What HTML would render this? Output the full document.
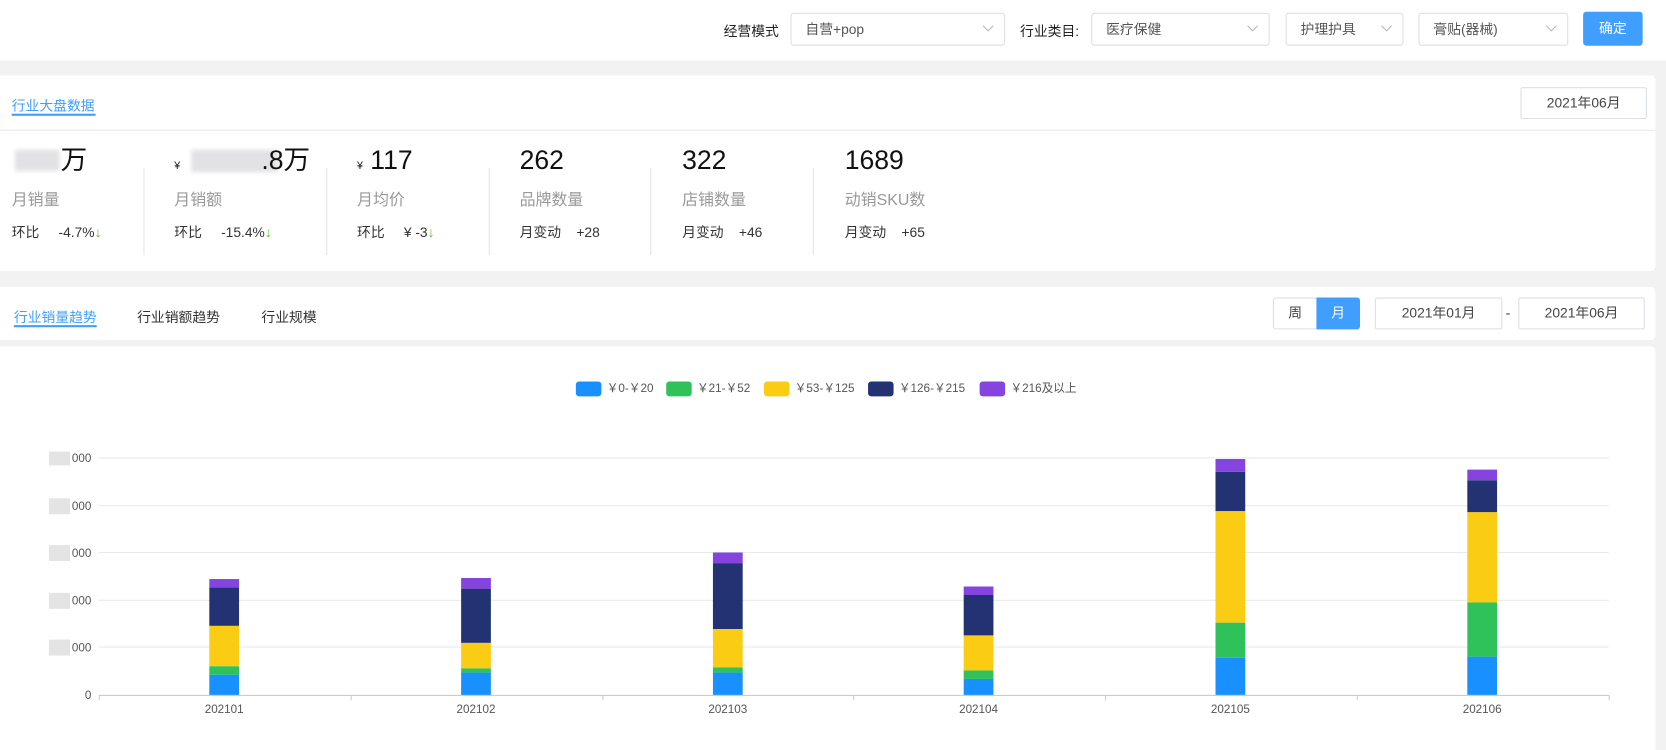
<!DOCTYPE html>
<html><head><meta charset="utf-8"><style>
html,body{margin:0;padding:0;width:1666px;height:741px;overflow:hidden;background:#f2f2f2;font-family:"Liberation Sans","Noto Sans CJK SC",sans-serif;}
#w{position:absolute;left:0;top:0;width:1568px;height:698px;transform:scale(1.0625);transform-origin:0 0;}
.a{position:absolute;white-space:nowrap;}
.p{position:absolute;background:#fff;}
.sel{position:absolute;border:1px solid #dcdfe6;border-radius:3px;background:#fff;font-size:13px;color:#555;box-sizing:border-box;height:31px;line-height:29px;padding-left:13px;}
.sel svg{position:absolute;right:10px;top:11px;}
.big{font-size:25px;color:#111;line-height:30px;}
.lbl{font-size:15px;color:#999;}
.sub{font-size:13px;color:#333;}
.dv{position:absolute;width:1px;background:#e4e4e4;top:158px;height:82px;}
.dt{position:absolute;border:1px solid #dcdfe6;border-radius:2px;font-size:13px;color:#444;text-align:center;box-sizing:border-box;height:30px;line-height:28px;background:#fff;}
.lg{position:absolute;top:359px;font-size:11px;color:#555;line-height:14px;}
.lg i{display:inline-block;width:24px;height:14px;border-radius:3px;vertical-align:top;margin-right:5px;}
.ar{color:#52c41a;}
.bl{position:absolute;background:#e2e2e4;filter:blur(2px);}
</style></head><body><div id="w">
<div class="p" style="left:0;top:0;width:1568px;height:57px;"></div>
<div class="a" style="left:681px;top:19px;font-size:13px;color:#222;">经营模式</div>
<div class="sel" style="left:744px;top:12px;width:202px;">自营+pop<svg width="10" height="6"><path d="M0 0L5 5L10 0" fill="none" stroke="#bbb"/></svg></div>
<div class="a" style="left:960px;top:19px;font-size:13px;color:#222;">行业类目:</div>
<div class="sel" style="left:1027px;top:12px;width:168px;">医疗保健<svg width="10" height="6"><path d="M0 0L5 5L10 0" fill="none" stroke="#bbb"/></svg></div>
<div class="sel" style="left:1210px;top:12px;width:111px;">护理护具<svg width="10" height="6"><path d="M0 0L5 5L10 0" fill="none" stroke="#bbb"/></svg></div>
<div class="sel" style="left:1335px;top:12px;width:141px;">膏贴(器械)<svg width="10" height="6"><path d="M0 0L5 5L10 0" fill="none" stroke="#bbb"/></svg></div>
<div class="a" style="left:1490px;top:11px;width:56px;height:32px;background:#409eff;border-radius:3px;color:#fff;font-size:13px;text-align:center;line-height:32px;">确定</div>

<div class="p" style="left:0;top:71px;width:1558px;height:184px;border-radius:0 4px 4px 0;"></div>
<div class="a" style="left:11px;top:89px;font-size:13px;color:#409eff;">行业大盘数据</div>
<div class="a" style="left:11px;top:107px;width:79px;height:2px;background:#409eff;"></div>
<div class="a" style="left:0;top:122px;width:1558px;height:1px;background:#e8e8e8;"></div>
<div class="dt" style="left:1431px;top:82px;width:119px;">2021年06月</div>

<div class="bl" style="left:14px;top:141px;width:42px;height:20px;"></div>
<div class="a big" style="left:57px;top:136px;">万</div>
<div class="a big" style="left:164px;top:136px;"><span style="font-size:10px">¥</span></div>
<div class="bl" style="left:180px;top:141px;width:82px;height:21px;"></div>
<div class="a big" style="left:246px;top:136px;">.8万</div>
<div class="a big" style="left:336px;top:136px;"><span style="font-size:10px">¥</span> 117</div>
<div class="a big" style="left:489px;top:136px;">262</div>
<div class="a big" style="left:642px;top:136px;">322</div>
<div class="a big" style="left:795px;top:136px;">1689</div>
<div class="a lbl" style="left:11px;top:177px;">月销量</div>
<div class="a lbl" style="left:164px;top:177px;">月销额</div>
<div class="a lbl" style="left:336px;top:177px;">月均价</div>
<div class="a lbl" style="left:489px;top:177px;">品牌数量</div>
<div class="a lbl" style="left:642px;top:177px;">店铺数量</div>
<div class="a lbl" style="left:795px;top:177px;">动销SKU数</div>
<div class="a sub" style="left:11px;top:208px;">环比 &nbsp;&nbsp;&nbsp; -4.7%<span class="ar">↓</span></div>
<div class="a sub" style="left:164px;top:208px;">环比 &nbsp;&nbsp;&nbsp; -15.4%<span class="ar">↓</span></div>
<div class="a sub" style="left:336px;top:208px;">环比 &nbsp;&nbsp;&nbsp; ¥ -3<span class="ar">↓</span></div>
<div class="a sub" style="left:489px;top:208px;">月变动 &nbsp;&nbsp; +28</div>
<div class="a sub" style="left:642px;top:208px;">月变动 &nbsp;&nbsp; +46</div>
<div class="a sub" style="left:795px;top:208px;">月变动 &nbsp;&nbsp; +65</div>
<div class="dv" style="left:135px"></div><div class="dv" style="left:307px"></div><div class="dv" style="left:460px"></div><div class="dv" style="left:612px"></div><div class="dv" style="left:765px"></div>

<div class="p" style="left:0;top:270px;width:1558px;height:50px;border-radius:0 4px 4px 0;"></div>
<div class="a" style="left:13px;top:288px;font-size:13px;color:#409eff;">行业销量趋势</div>
<div class="a" style="left:13px;top:306px;width:78px;height:2px;background:#409eff;"></div>
<div class="a" style="left:129px;top:288px;font-size:13px;color:#333;">行业销额趋势</div>
<div class="a" style="left:246px;top:288px;font-size:13px;color:#333;">行业规模</div>
<div class="dt" style="left:1198px;top:280px;width:42px;border-radius:3px 0 0 3px;">周</div>
<div class="dt" style="left:1239px;top:280px;width:41px;background:#409eff;border-color:#409eff;color:#fff;border-radius:0 3px 3px 0;">月</div>
<div class="dt" style="left:1294px;top:280px;width:120px;">2021年01月</div>
<div class="a" style="left:1417px;top:287px;font-size:13px;color:#333;">-</div>
<div class="dt" style="left:1429px;top:280px;width:119px;">2021年06月</div>

<div class="p" style="left:0;top:326px;width:1558px;height:380px;border-radius:0 4px 0 0;"></div>
<div class="lg" style="left:542px"><i style="background:#1890ff"></i>￥0-￥20</div>
<div class="lg" style="left:627px"><i style="background:#2fc25b"></i>￥21-￥52</div>
<div class="lg" style="left:719px"><i style="background:#facc14"></i>￥53-￥125</div>
<div class="lg" style="left:817px"><i style="background:#223273"></i>￥126-￥215</div>
<div class="lg" style="left:922px"><i style="background:#8543e0"></i>￥216及以上</div>

<svg class="a" style="left:0;top:0" width="1568" height="698" font-family="Liberation Sans,sans-serif" font-size="11" fill="#555">
<g stroke="#e9e9e9"><line x1="93" x2="1514" y1="431" y2="431"/><line x1="93" x2="1514" y1="476" y2="476"/><line x1="93" x2="1514" y1="520" y2="520"/><line x1="93" x2="1514" y1="565" y2="565"/><line x1="93" x2="1514" y1="609" y2="609"/></g>
<g stroke="#ccc"><line x1="93" x2="1514" y1="654.5" y2="654.5"/>
<line x1="93.5" x2="93.5" y1="654" y2="659"/><line x1="330.5" x2="330.5" y1="654" y2="659"/><line x1="567.5" x2="567.5" y1="654" y2="659"/><line x1="803.5" x2="803.5" y1="654" y2="659"/><line x1="1040.5" x2="1040.5" y1="654" y2="659"/><line x1="1277.5" x2="1277.5" y1="654" y2="659"/><line x1="1514.5" x2="1514.5" y1="654" y2="659"/></g>
<g fill="#e4e4e4"><rect x="46" y="425" width="20" height="13"/><rect x="46" y="469" width="20" height="15"/><rect x="46" y="513" width="20" height="15"/><rect x="46" y="558" width="20" height="15"/><rect x="46" y="602" width="20" height="15"/></g>
<g text-anchor="end"><text x="86" y="435">000</text><text x="86" y="480">000</text><text x="86" y="524">000</text><text x="86" y="569">000</text><text x="86" y="613">000</text><text x="86" y="658">0</text></g>
<g text-anchor="middle"><text x="211" y="671">202101</text><text x="448" y="671">202102</text><text x="685" y="671">202103</text><text x="921" y="671">202104</text><text x="1158" y="671">202105</text><text x="1395" y="671">202106</text></g>
<g>
<rect x="197" y="635" width="28" height="19" fill="#1890ff"/><rect x="197" y="627" width="28" height="8" fill="#2fc25b"/><rect x="197" y="589" width="28" height="38" fill="#facc14"/><rect x="197" y="553" width="28" height="36" fill="#223273"/><rect x="197" y="545" width="28" height="8" fill="#8543e0"/>
<rect x="434" y="633" width="28" height="21" fill="#1890ff"/><rect x="434" y="629" width="28" height="4" fill="#2fc25b"/><rect x="434" y="605" width="28" height="24" fill="#facc14"/><rect x="434" y="554" width="28" height="51" fill="#223273"/><rect x="434" y="544" width="28" height="10" fill="#8543e0"/>
<rect x="671" y="633" width="28" height="21" fill="#1890ff"/><rect x="671" y="628" width="28" height="5" fill="#2fc25b"/><rect x="671" y="592" width="28" height="36" fill="#facc14"/><rect x="671" y="530" width="28" height="62" fill="#223273"/><rect x="671" y="520" width="28" height="10" fill="#8543e0"/>
<rect x="907" y="639" width="28" height="15" fill="#1890ff"/><rect x="907" y="631" width="28" height="8" fill="#2fc25b"/><rect x="907" y="598" width="28" height="33" fill="#facc14"/><rect x="907" y="560" width="28" height="38" fill="#223273"/><rect x="907" y="552" width="28" height="8" fill="#8543e0"/>
<rect x="1144" y="619" width="28" height="35" fill="#1890ff"/><rect x="1144" y="586" width="28" height="33" fill="#2fc25b"/><rect x="1144" y="481" width="28" height="105" fill="#facc14"/><rect x="1144" y="444" width="28" height="37" fill="#223273"/><rect x="1144" y="432" width="28" height="12" fill="#8543e0"/>
<rect x="1381" y="618" width="28" height="36" fill="#1890ff"/><rect x="1381" y="567" width="28" height="51" fill="#2fc25b"/><rect x="1381" y="482" width="28" height="85" fill="#facc14"/><rect x="1381" y="452" width="28" height="30" fill="#223273"/><rect x="1381" y="442" width="28" height="10" fill="#8543e0"/>
</g>
</svg>
</div></body></html>
